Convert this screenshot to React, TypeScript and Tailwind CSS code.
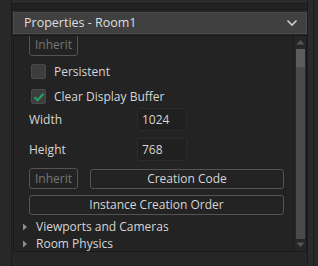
import React from "react";

const font = { fontFamily: '"Open Sans", "Noto Sans", sans-serif' };

const Check = () => (
  <svg width="12" height="10" viewBox="0 0 12 10">
    <path d="M1.5 5.2 L4.6 8.2 L10.5 1.8" stroke="#1fa362" strokeWidth="2.2" fill="none" />
  </svg>
);

const Arrow = () => (
  <svg width="6" height="8" viewBox="0 0 6 8">
    <path d="M1 0.5 L5 4 L1 7.5 Z" fill="#8a8f98" />
  </svg>
);

export default function App() {
  return (
    <div
      className="w-[318px] h-[266px] bg-[#262626] flex overflow-hidden text-[12px] text-[#d6d6d6]"
      style={font}
    >
      {/* left strip */}
      <div className="w-[12px] h-full bg-[#282828] border-r border-[#1b1b1b]" />

      {/* main column */}
      <div className="w-[295px] h-full flex flex-col">
        <div className="h-[4px] bg-[#2c2c2c] border-b border-[#1a1a1a]" />
        <div className="h-[6px] bg-[#222] border-b border-[#1a1a1a]" />
        <div className="h-[2px]" />

        {/* header */}
        <div className="ml-[1px] h-[22px] bg-[#404040] border border-[#4c4c4c] flex items-center pl-[10px] pr-[8px] justify-between">
          <span className="text-[#dedede] text-[12.5px] leading-none">Properties - Room1</span>
          <svg width="12" height="8" viewBox="0 0 12 8">
            <path d="M1.5 1.5 L6 6 L10.5 1.5" stroke="#d0d0d0" strokeWidth="1.6" fill="none" />
          </svg>
        </div>

        {/* panel */}
        <div className="ml-[1px] mt-[1px] h-[217px] bg-[#232323] border border-[#1a1a1a] flex">
          <div className="flex-1 flex flex-col pl-[15px] pr-[9px] overflow-hidden">
            <div className="w-[49px] h-[22px] -mt-[2px] border border-[#545454] rounded-[3px] text-[#767676] flex items-center justify-center shrink-0">
              Inherit
            </div>

            <div className="flex items-center mt-[7px] h-[17px] pl-[2px]">
              <div className="w-[15px] h-[15px] bg-[#3d3d3d] border border-[#4a4a4a] rounded-[2px]" />
              <span className="ml-[8px]">Persistent</span>
            </div>

            <div className="flex items-center mt-[8px] h-[17px] pl-[2px]">
              <div className="w-[15px] h-[15px] bg-[#3d3d3d] border border-[#4a4a4a] rounded-[2px] flex items-center justify-center">
                <Check />
              </div>
              <span className="ml-[8px]">Clear Display Buffer</span>
            </div>

            <div className="flex items-center mt-[3px] h-[23px]">
              <span className="w-[108px]">Width</span>
              <div className="w-[50px] h-[23px] bg-[#202020] border border-[#2c2c2c] rounded-[2px] flex items-center pl-[4px]">
                1024
              </div>
            </div>

            <div className="flex items-center mt-[7px] h-[23px]">
              <span className="w-[108px]">Height</span>
              <div className="w-[50px] h-[23px] bg-[#202020] border border-[#2c2c2c] rounded-[2px] flex items-center pl-[4px]">
                768
              </div>
            </div>

            <div className="flex items-center mt-[7px] h-[21px] gap-[12px]">
              <div className="w-[49px] h-[21px] border border-[#545454] rounded-[3px] text-[#767676] flex items-center justify-center">
                Inherit
              </div>
              <div className="flex-1 h-[20px] border border-[#545454] rounded-[3px] flex items-center justify-center">
                Creation Code
              </div>
            </div>

            <div className="mt-[6px] h-[20px] border border-[#545454] rounded-[3px] flex items-center justify-center">
              Instance Creation Order
            </div>

            <div className="flex items-center mt-[4px] h-[16px] -ml-[7px]">
              <Arrow />
              <span className="ml-[8px]">Viewports and Cameras</span>
            </div>
            <div className="flex items-center h-[16px] mt-[1px] -ml-[7px]">
              <Arrow />
              <span className="ml-[8px]">Room Physics</span>
            </div>
          </div>

          {/* scrollbar */}
          <div className="w-[13px] h-full bg-[#262626] border-l border-[#1c1c1c] flex flex-col items-center">
            <svg width="9" height="6" viewBox="0 0 9 6" className="mt-[3px]">
              <path d="M0.5 5.5 L4.5 1 L8.5 5.5 Z" fill="#555" />
            </svg>
            <div className="w-[9px] mt-[4px] h-[18px] bg-[#5c5c5c]" />
            <div className="w-[9px] flex-1 bg-[#4a4a4a]" />
            <svg width="9" height="6" viewBox="0 0 9 6" className="my-[3px]">
              <path d="M0.5 0.5 L4.5 5 L8.5 0.5 Z" fill="#555" />
            </svg>
          </div>
        </div>
      </div>

      {/* right strips */}
      <div className="w-[1px] h-full bg-[#1b1b1b]" />
      <div className="w-[5px] h-full bg-[#2a2a2a]" />
      <div className="w-[1px] h-full bg-[#1b1b1b]" />
      <div className="flex-1 h-full bg-[#282828]" />
    </div>
  );
}
